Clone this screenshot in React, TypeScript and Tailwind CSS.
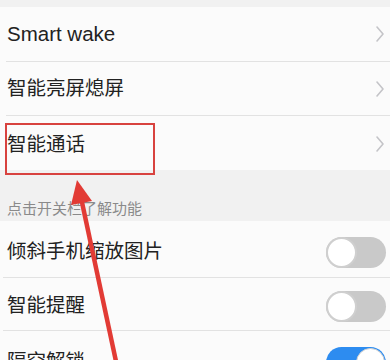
import React from "react";

const Chevron = () => (
  <svg width="10" height="18" viewBox="0 0 10 18" fill="none">
    <path d="M2 2 L8 9 L2 16" stroke="#c4c4c8" strokeWidth="1.6" strokeLinecap="round" strokeLinejoin="round" />
  </svg>
);

const Toggle = ({ on }: { on?: boolean }) =>
  on ? (
    <div className="w-[60px] h-[31px] rounded-full bg-[#2d8cf0] relative">
      <div className="absolute right-[1px] top-[1px] w-[29px] h-[29px] rounded-full bg-white border border-[#d0d0d0]" />
    </div>
  ) : (
    <div className="w-[60px] h-[31px] rounded-full bg-[#c9c9c9] relative">
      <div className="absolute left-0 top-0 w-[31px] h-[31px] rounded-full bg-white border-2 border-[#cfcfcf]" />
    </div>
  );

const font = { fontFamily: '"Liberation Sans", "Noto Sans CJK SC", sans-serif' };

export default function App() {
  return (
    <div className="relative w-[390px] h-[360px] overflow-hidden bg-[#f1f1f1] text-[#222]" style={font}>
      <div className="h-[7px]" />
      <div className="bg-[#fbfbfb]">
        <div className="h-[54px] flex items-center justify-between pl-[7px] pr-[5px]">
          <span className="text-[20.5px]">Smart wake</span>
          <Chevron />
        </div>
        <div className="ml-[6px] h-px bg-[#e2e2e2]" />
        <div className="h-[53px] flex items-center justify-between pl-[7px] pr-[5px]">
          <span className="text-[19.5px]">智能亮屏熄屏</span>
          <Chevron />
        </div>
        <div className="ml-[6px] h-px bg-[#e2e2e2]" />
        <div className="h-[54px] flex items-start justify-between pl-[7px] pr-[5px] pt-[16px]">
          <span className="text-[19.5px] leading-[24px]">智能通话</span>
          <div className="pt-[3px]"><Chevron /></div>
        </div>
      </div>
      <div className="h-[51px] flex items-end pl-[7px] pb-[3px]">
        <span className="text-[15px] text-[#8a8a8a] leading-[18px]">点击开关栏了解功能</span>
      </div>
      <div className="bg-[#fbfbfb]">
        <div className="h-[56px] flex items-center justify-between pl-[7px] pr-[4px] pt-[6px]">
          <span className="text-[19.5px]">倾斜手机缩放图片</span>
          <Toggle />
        </div>
        <div className="ml-[3px] h-px bg-[#e2e2e2]" />
        <div className="h-[52px] flex items-center justify-between pl-[7px] pr-[4px] pt-[4px]">
          <span className="text-[19.5px]">智能提醒</span>
          <Toggle />
        </div>
        <div className="ml-[3px] h-px bg-[#e2e2e2]" />
        <div className="h-[58px] flex items-center justify-between pl-[7px] pr-[4px] pt-[4px]">
          <span className="text-[19.5px]">隔空解锁</span>
          <Toggle on />
        </div>
      </div>

      <div className="absolute left-[5px] top-[123px] w-[150px] h-[52px] border-2 border-[#d8423f]" />

      <svg className="absolute left-0 top-0" width="390" height="360" viewBox="0 0 390 360">
        <line x1="81.5" y1="200" x2="117" y2="366" stroke="#e23b35" strokeWidth="4.5" />
        <polygon points="77,180 92,201 71,205" fill="#e23b35" />
      </svg>
    </div>
  );
}
